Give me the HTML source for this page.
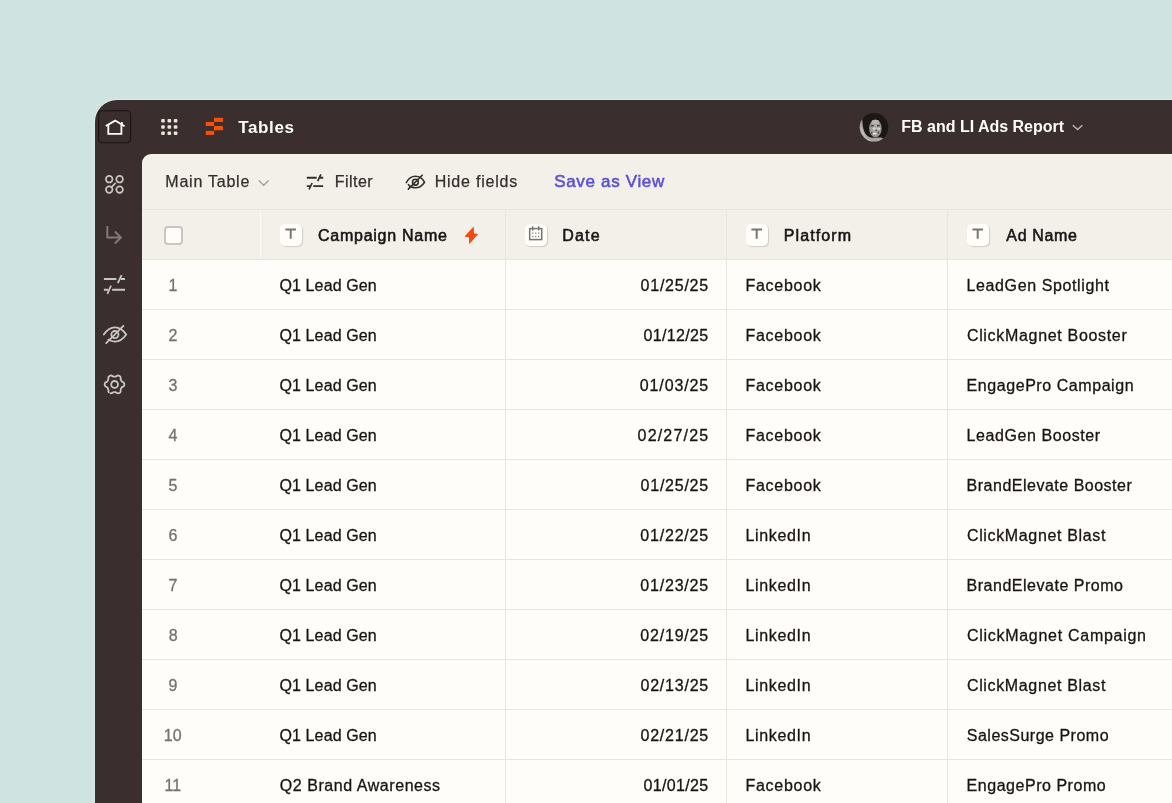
<!DOCTYPE html>
<html lang="en">
<head>
<meta charset="utf-8">
<title>Tables – FB and LI Ads Report</title>
<style>
*{box-sizing:border-box;margin:0;padding:0}
html,body{width:1172px;height:803px;overflow:hidden;background:#cfe4e1;font-family:"Liberation Sans",sans-serif}
.abs{position:absolute}
#app{position:absolute;left:95px;top:100px;width:1100px;height:720px;background:#3a2f2e;border-top-left-radius:22px;box-shadow:0 0 0 1px rgba(240,244,242,.4)}
#panel{position:absolute;left:142px;top:154px;width:1040px;height:660px;background:#f3f0e9;border-top-left-radius:9px;overflow:hidden}
#rowsbg{position:absolute;left:0;top:106px;width:1040px;height:560px;background:#fefdf9}
.hl{position:absolute;left:0;width:1040px;height:1px;background:#e9e6dc}
.vl{position:absolute;top:56px;width:1px;height:620px;background:#e9e6dc}
.chip{position:absolute;width:22px;height:22px;border-radius:5px;background:#fefdf9;box-shadow:1px 1px 1px rgba(110,95,75,.24);top:224px}
#txt{position:absolute;left:0;top:0;width:1172px;height:803px;will-change:transform}
.t{position:absolute;white-space:nowrap;line-height:20px;color:#191413}
.w{color:#fffdf9}
.b{font-weight:bold}
.sb{font-weight:bold}
.tb{color:#362e2d;-webkit-text-stroke:.25px #362e2d}
.sv{color:#5b50d9;-webkit-text-stroke:.55px #5b50d9}
.hd{-webkit-text-stroke:.55px #191413}
.num{color:#77716d;-webkit-text-stroke:.3px #77716d}
.cell{-webkit-text-stroke:.3px #191413}
svg{position:absolute;left:0;top:0}
</style>
</head>
<body>
<div id="app"></div>
<div id="panel">
  <div id="rowsbg"></div>
  <div class="hl" style="top:55px"></div>
  <div class="hl" style="top:105px;background:#e6e3d9"></div>
  <div class="hl" style="top:155px"></div><div class="hl" style="top:205px"></div><div class="hl" style="top:255px"></div>
  <div class="hl" style="top:305px"></div><div class="hl" style="top:355px"></div><div class="hl" style="top:405px"></div>
  <div class="hl" style="top:455px"></div><div class="hl" style="top:505px"></div><div class="hl" style="top:555px"></div>
  <div class="hl" style="top:605px"></div>
  <div class="vl" style="left:118px;height:49px;background:#fbfaf5"></div>
  <div class="vl" style="left:363px"></div>
  <div class="vl" style="left:584px"></div>
  <div class="vl" style="left:805px"></div>
</div>
<div class="abs" style="left:164px;top:226px;width:19px;height:19px;border:2px solid #c9c6c0;border-radius:4px;background:#fefdf9"></div>
<div class="chip" style="left:280px"></div>
<div class="chip" style="left:525px"></div>
<div class="chip" style="left:746px"></div>
<div class="chip" style="left:967px"></div>
<svg width="1172" height="803" viewBox="0 0 1172 803" fill="none">
  <!-- home button -->
  <rect x="98.6" y="110.6" width="32" height="32" rx="3.5" fill="#392e2d" stroke="#1f1817" stroke-width="1.3"/>
  <g stroke="#fffdf9" stroke-width="1.8" stroke-linecap="square" stroke-linejoin="miter">
    <path d="M106.6 125.6 L115.2 120.6 L123.8 125.8"/>
    <path d="M108.3 126 V133.8 H121.4 V126"/>
    <path d="M121.9 122 V124" stroke-linecap="butt"/>
  </g>
  <!-- app grid dots -->
  <g fill="#ebe6dd">
    <rect x="161.2" y="119" width="3.6" height="3.6" rx="1"/><rect x="167.5" y="119" width="3.6" height="3.6" rx="1"/><rect x="173.8" y="119" width="3.6" height="3.6" rx="1"/>
    <rect x="161.2" y="125.2" width="3.6" height="3.6" rx="1"/><rect x="167.5" y="125.2" width="3.6" height="3.6" rx="1"/><rect x="173.8" y="125.2" width="3.6" height="3.6" rx="1"/>
    <rect x="161.2" y="131.4" width="3.6" height="3.6" rx="1"/><rect x="167.5" y="131.4" width="3.6" height="3.6" rx="1"/><rect x="173.8" y="131.4" width="3.6" height="3.6" rx="1"/>
  </g>
  <!-- tables logo -->
  <g fill="#ff4f00">
    <rect x="214" y="117.8" width="9" height="4.1"/>
    <rect x="205.8" y="122" width="8.3" height="4"/>
    <path d="M214 126.1 H222.2 L223 126.9 V130.2 H215 L214 131.2 Z"/>
    <rect x="205.8" y="130.9" width="8.3" height="4"/>
  </g>
  <!-- sidebar: apps -->
  <g stroke="#c9c7c0" stroke-width="1.7">
    <circle cx="109.2" cy="179.2" r="3.3"/><circle cx="119.6" cy="179.2" r="3.3"/>
    <circle cx="109.2" cy="189.6" r="3.3"/><circle cx="119.6" cy="189.6" r="3.3"/>
    <path d="M111.6 187.1 L115.2 183.4" stroke-linecap="round"/>
  </g>
  <!-- sidebar: arrow -->
  <g stroke="#827c78" stroke-width="1.9">
    <path d="M107.3 226 V237.5 H120.4"/>
    <path d="M114.9 231.5 L120.9 237.5 L114.9 243.5"/>
  </g>
  <!-- sidebar: filter -->
  <g stroke="#c9c7c0" stroke-width="2">
    <path d="M103.9 279 H116.4 M120.9 279 H125"/>
    <path d="M121.6 275.2 L117.8 283.2" stroke-width="1.8"/>
    <path d="M103.9 289.8 H108 M112.1 289.8 H125"/>
    <path d="M111 285.6 L107.4 293.8" stroke-width="1.8"/>
  </g>
  <!-- sidebar: eye -->
  <g stroke="#c9c7c0" stroke-width="1.8" stroke-linecap="round">
    <path d="M103.8 334.6 C107 329.6 110.8 327.3 115 327.3 C119.2 327.3 123 329.6 126.2 334.6 C123 339.4 119.2 341.6 115 341.6 C112.6 341.6 110.4 340.9 108.4 339.6"/>
    <circle cx="114.9" cy="334.6" r="3.6"/>
    <path d="M123.4 325.9 L106.2 343.2"/>
  </g>
  <!-- sidebar: gear -->
  <g stroke="#c9c7c0" stroke-width="1.8" stroke-linejoin="round" stroke-linecap="round">
    <path id="gear" d="M108.7 392.1 L108.4 391.5 L108.3 390.6 L108.4 389.7 L108.2 389.1 L108.0 388.6 L107.8 388.1 L107.4 387.7 L107.0 387.3 L106.5 386.8 L105.6 386.5 L105.1 385.9 L104.8 385.2 L104.7 384.6 L104.7 383.9 L104.9 383.2 L105.3 382.6 L106.0 382.1 L106.8 381.8 L107.3 381.3 L107.6 380.9 L107.9 380.4 L108.1 379.9 L108.3 379.4 L108.4 378.7 L108.3 377.7 L108.5 377.0 L108.9 376.4 L109.5 376.0 L110.1 375.7 L110.7 375.5 L111.5 375.5 L112.2 375.9 L112.9 376.4 L113.5 376.6 L114.1 376.7 L114.6 376.7 L115.2 376.6 L115.7 376.5 L116.4 376.3 L117.2 375.6 L117.9 375.5 L118.6 375.6 L119.2 375.8 L119.8 376.2 L120.3 376.7 L120.6 377.3 L120.7 378.2 L120.6 379.1 L120.8 379.7 L121.0 380.2 L121.2 380.7 L121.6 381.1 L122.0 381.5 L122.5 382.0 L123.4 382.3 L123.9 382.9 L124.2 383.6 L124.3 384.2 L124.3 384.9 L124.1 385.6 L123.7 386.2 L123.0 386.7 L122.2 387.0 L121.7 387.5 L121.4 387.9 L121.1 388.4 L120.9 388.9 L120.7 389.4 L120.6 390.1 L120.7 391.1 L120.5 391.8 L120.1 392.4 L119.5 392.8 L118.9 393.1 L118.3 393.3 L117.5 393.3 L116.8 392.9 L116.1 392.4 L115.5 392.2 L114.9 392.1 L114.4 392.1 L113.8 392.2 L113.3 392.3 L112.6 392.5 L111.8 393.2 L111.1 393.3 L110.4 393.2"/>
    <circle cx="114.6" cy="384.4" r="3.4"/>
  </g>
  <!-- avatar -->
  <defs>
    <clipPath id="avc"><circle cx="874" cy="127.3" r="14.3"/></clipPath>
    <radialGradient id="face" cx="0.5" cy="0.5" r="0.6"><stop offset="0" stop-color="#b3afaa"/><stop offset="0.7" stop-color="#9a9692"/><stop offset="1" stop-color="#6a6562"/></radialGradient>
    <filter id="avb" x="-10%" y="-10%" width="120%" height="120%"><feGaussianBlur stdDeviation="0.55"/></filter>
  </defs>
  <g clip-path="url(#avc)"><g filter="url(#avb)">
    <rect x="854" y="108" width="40" height="40" fill="#1d1918"/>
    <path d="M862.2 114 C862 124 863 131 866.5 135 C868.5 137 870 137.6 872 137.8 L881 137.6 L886.5 139.5 L888 148 L854 148 L854 114 Z" fill="#a9a6a1"/>
    <path d="M860.5 126 C861 132 864 138 870 141.5 L874 142.5 L866 138 Z" fill="#c9c6c1"/>
    <ellipse cx="875.4" cy="128.4" rx="6.3" ry="9" fill="url(#face)"/>
    <ellipse cx="875.4" cy="122" rx="3.8" ry="2.2" fill="#b9b6b1"/>
    <ellipse cx="874.2" cy="128.6" rx="1.5" ry="1.2" fill="#dcd9d4"/><ellipse cx="878.8" cy="128.6" rx="1.5" ry="1.2" fill="#dcd9d4"/>
    <rect x="872.8" y="132.9" width="3.8" height="1.4" rx=".6" fill="#f4f2ee"/>
    <rect x="870.8" y="125" width="3" height="1.4" fill="#4a4542"/><rect x="877" y="125" width="2.8" height="1.4" fill="#4a4542"/>
    <rect x="875.2" y="129.8" width="1.8" height="1.4" fill="#615c59"/>
    <rect x="871" y="132" width="1.4" height="1.8" fill="#55504d"/><rect x="877.6" y="131.6" width="1.6" height="2" fill="#55504d"/>
  </g></g>
  <!-- chevrons -->
  <path d="M1072.8 125.2 L1077.6 129.6 L1082.4 125.2" stroke="#b9b4ae" stroke-width="1.5"/>
  <path d="M258.8 180.6 L263.7 185.2 L268.6 180.6" stroke="#a39e98" stroke-width="1.4"/>
  <!-- toolbar: filter icon -->
  <g stroke="#362e2d" stroke-width="1.9">
    <path d="M306.8 177.8 H316.7 M319.6 177.8 H323.2"/>
    <path d="M320.9 174.3 L317.7 181.1" stroke-width="1.7"/>
    <path d="M306.8 186.1 H310.2 M313.2 186.1 H323.2"/>
    <path d="M312.1 183 L309.1 189.4" stroke-width="1.7"/>
  </g>
  <!-- toolbar: eye icon -->
  <g stroke="#362e2d" stroke-width="1.6" stroke-linecap="round">
    <path d="M406.3 182.6 C408.5 178.4 411.6 176.3 415.4 176.3 C419.2 176.3 422.4 178.4 424.5 182.2 C422.2 185.8 419.2 187.8 415.4 187.8 C413.2 187.8 411.4 187.3 409.8 186.3"/>
    <path d="M408.4 184.5 L409.4 185.7"/>
    <circle cx="415.4" cy="182.2" r="2.9"/>
    <path d="M422.2 175.2 L408.3 189.1"/>
  </g>
  <!-- header icons: T -->
  <g stroke="#7a7571" stroke-width="2">
    <path d="M285.4 229.4 H296 M290.7 229.4 V238.8"/>
    <path d="M751.4 229.4 H762 M756.7 229.4 V238.8"/>
    <path d="M972.4 229.4 H983 M977.7 229.4 V238.8"/>
  </g>
  <!-- calendar -->
  <g stroke="#7a7571" stroke-width="1.5">
    <rect x="529.7" y="228.6" width="12" height="11"/>
    <path d="M532.7 226.3 V230.6 M538.7 226.3 V230.6"/>
  </g>
  <g fill="#7d7874">
    <rect x="532.2" y="232.5" width="1.2" height="1.2"/><rect x="535.1" y="232.5" width="1.2" height="1.2"/><rect x="538" y="232.5" width="1.2" height="1.2"/>
    <rect x="532.2" y="235.9" width="1.2" height="1.2"/><rect x="535.1" y="235.9" width="1.2" height="1.2"/><rect x="538" y="235.9" width="1.2" height="1.2"/>
  </g>
  <!-- lightning -->
  <path d="M473.7 226.5 L474 233.5 L478.1 234 L469.2 244.3 L469 237.2 L464.5 236.5 Z" fill="#f9480b"/>
</svg>
<div id="txt">
<div class="grp" id="topbar-text"><span class="t w b" id="tables" style="left:238.23px;top:118px;font-size:17px;letter-spacing:0.621px">Tables</span><span class="t w sb" id="report" style="left:901.36px;top:117px;font-size:16px;letter-spacing:-0.014px">FB and LI Ads Report</span></div>
<div class="grp" id="toolbar-text"><span class="t tb" id="maint" style="left:165.31px;top:172px;font-size:16px;letter-spacing:0.774px">Main Table</span><span class="t tb" id="filter" style="left:334.72px;top:172px;font-size:16px;letter-spacing:0.468px">Filter</span><span class="t tb" id="hide" style="left:434.71px;top:172px;font-size:16px;letter-spacing:0.774px">Hide fields</span><span class="t sv" id="save" style="left:554.18px;top:172px;font-size:17px;letter-spacing:0.672px">Save as View</span></div>
<div class="grp" id="header-text"><span class="t hd" id="h1" style="left:318.05px;top:226px;font-size:16px;letter-spacing:0.738px">Campaign Name</span><span class="t hd" id="h2" style="left:562.34px;top:226px;font-size:16px;letter-spacing:1.163px">Date</span><span class="t hd" id="h3" style="left:783.87px;top:226px;font-size:16px;letter-spacing:1.082px">Platform</span><span class="t hd" id="h4" style="left:1006.32px;top:226px;font-size:16px;letter-spacing:0.655px">Ad Name</span></div>
<div class="grp row"><span class="t num" id="r0c0" style="left:168.43px;top:276px;font-size:16px;letter-spacing:0.000px">1</span><span class="t cell" id="r0c1" style="left:279.43px;top:276px;font-size:16px;letter-spacing:0.126px">Q1 Lead Gen</span><span class="t cell" id="r0c2" style="left:640.57px;top:276px;font-size:16px;letter-spacing:0.761px">01/25/25</span><span class="t cell" id="r0c3" style="left:745.45px;top:276px;font-size:16px;letter-spacing:0.734px">Facebook</span><span class="t cell" id="r0c4" style="left:966.61px;top:276px;font-size:16px;letter-spacing:0.605px">LeadGen Spotlight</span></div>
<div class="grp row"><span class="t num" id="r1c0" style="left:168.55px;top:326px;font-size:16px;letter-spacing:0.000px">2</span><span class="t cell" id="r1c1" style="left:279.43px;top:326px;font-size:16px;letter-spacing:0.126px">Q1 Lead Gen</span><span class="t cell" id="r1c2" style="left:643.47px;top:326px;font-size:16px;letter-spacing:0.358px">01/12/25</span><span class="t cell" id="r1c3" style="left:745.45px;top:326px;font-size:16px;letter-spacing:0.734px">Facebook</span><span class="t cell" id="r1c4" style="left:966.92px;top:326px;font-size:16px;letter-spacing:0.679px">ClickMagnet Booster</span></div>
<div class="grp row"><span class="t num" id="r2c0" style="left:168.59px;top:376px;font-size:16px;letter-spacing:0.000px">3</span><span class="t cell" id="r2c1" style="left:279.43px;top:376px;font-size:16px;letter-spacing:0.126px">Q1 Lead Gen</span><span class="t cell" id="r2c2" style="left:639.85px;top:376px;font-size:16px;letter-spacing:0.860px">01/03/25</span><span class="t cell" id="r2c3" style="left:745.45px;top:376px;font-size:16px;letter-spacing:0.734px">Facebook</span><span class="t cell" id="r2c4" style="left:966.61px;top:376px;font-size:16px;letter-spacing:0.561px">EngagePro Campaign</span></div>
<div class="grp row"><span class="t num" id="r3c0" style="left:168.54px;top:426px;font-size:16px;letter-spacing:0.000px">4</span><span class="t cell" id="r3c1" style="left:279.43px;top:426px;font-size:16px;letter-spacing:0.126px">Q1 Lead Gen</span><span class="t cell" id="r3c2" style="left:637.56px;top:426px;font-size:16px;letter-spacing:1.193px">02/27/25</span><span class="t cell" id="r3c3" style="left:745.45px;top:426px;font-size:16px;letter-spacing:0.734px">Facebook</span><span class="t cell" id="r3c4" style="left:966.61px;top:426px;font-size:16px;letter-spacing:0.577px">LeadGen Booster</span></div>
<div class="grp row"><span class="t num" id="r4c0" style="left:168.54px;top:476px;font-size:16px;letter-spacing:0.000px">5</span><span class="t cell" id="r4c1" style="left:279.43px;top:476px;font-size:16px;letter-spacing:0.126px">Q1 Lead Gen</span><span class="t cell" id="r4c2" style="left:640.57px;top:476px;font-size:16px;letter-spacing:0.761px">01/25/25</span><span class="t cell" id="r4c3" style="left:745.45px;top:476px;font-size:16px;letter-spacing:0.734px">Facebook</span><span class="t cell" id="r4c4" style="left:966.60px;top:476px;font-size:16px;letter-spacing:0.502px">BrandElevate Booster</span></div>
<div class="grp row"><span class="t num" id="r5c0" style="left:168.55px;top:526px;font-size:16px;letter-spacing:0.000px">6</span><span class="t cell" id="r5c1" style="left:279.43px;top:526px;font-size:16px;letter-spacing:0.126px">Q1 Lead Gen</span><span class="t cell" id="r5c2" style="left:640.34px;top:526px;font-size:16px;letter-spacing:0.796px">01/22/25</span><span class="t cell" id="r5c3" style="left:745.45px;top:526px;font-size:16px;letter-spacing:0.668px">LinkedIn</span><span class="t cell" id="r5c4" style="left:966.93px;top:526px;font-size:16px;letter-spacing:0.649px">ClickMagnet Blast</span></div>
<div class="grp row"><span class="t num" id="r6c0" style="left:168.61px;top:576px;font-size:16px;letter-spacing:0.000px">7</span><span class="t cell" id="r6c1" style="left:279.43px;top:576px;font-size:16px;letter-spacing:0.126px">Q1 Lead Gen</span><span class="t cell" id="r6c2" style="left:640.35px;top:576px;font-size:16px;letter-spacing:0.794px">01/23/25</span><span class="t cell" id="r6c3" style="left:745.45px;top:576px;font-size:16px;letter-spacing:0.668px">LinkedIn</span><span class="t cell" id="r6c4" style="left:966.60px;top:576px;font-size:16px;letter-spacing:0.513px">BrandElevate Promo</span></div>
<div class="grp row"><span class="t num" id="r7c0" style="left:168.68px;top:626px;font-size:16px;letter-spacing:0.000px">8</span><span class="t cell" id="r7c1" style="left:279.43px;top:626px;font-size:16px;letter-spacing:0.126px">Q1 Lead Gen</span><span class="t cell" id="r7c2" style="left:640.34px;top:626px;font-size:16px;letter-spacing:0.795px">02/19/25</span><span class="t cell" id="r7c3" style="left:745.45px;top:626px;font-size:16px;letter-spacing:0.668px">LinkedIn</span><span class="t cell" id="r7c4" style="left:966.93px;top:626px;font-size:16px;letter-spacing:0.720px">ClickMagnet Campaign</span></div>
<div class="grp row"><span class="t num" id="r8c0" style="left:168.60px;top:676px;font-size:16px;letter-spacing:0.000px">9</span><span class="t cell" id="r8c1" style="left:279.43px;top:676px;font-size:16px;letter-spacing:0.126px">Q1 Lead Gen</span><span class="t cell" id="r8c2" style="left:640.52px;top:676px;font-size:16px;letter-spacing:0.774px">02/13/25</span><span class="t cell" id="r8c3" style="left:745.45px;top:676px;font-size:16px;letter-spacing:0.668px">LinkedIn</span><span class="t cell" id="r8c4" style="left:966.93px;top:676px;font-size:16px;letter-spacing:0.649px">ClickMagnet Blast</span></div>
<div class="grp row"><span class="t num" id="r9c0" style="left:163.85px;top:726px;font-size:16px;letter-spacing:0.000px">10</span><span class="t cell" id="r9c1" style="left:279.43px;top:726px;font-size:16px;letter-spacing:0.126px">Q1 Lead Gen</span><span class="t cell" id="r9c2" style="left:640.50px;top:726px;font-size:16px;letter-spacing:0.777px">02/21/25</span><span class="t cell" id="r9c3" style="left:745.45px;top:726px;font-size:16px;letter-spacing:0.668px">LinkedIn</span><span class="t cell" id="r9c4" style="left:966.81px;top:726px;font-size:16px;letter-spacing:0.497px">SalesSurge Promo</span></div>
<div class="grp row"><span class="t num" id="r10c0" style="left:164.55px;top:776px;font-size:16px;letter-spacing:0.000px">11</span><span class="t cell" id="r10c1" style="left:279.75px;top:776px;font-size:16px;letter-spacing:0.556px">Q2 Brand Awareness</span><span class="t cell" id="r10c2" style="left:643.58px;top:776px;font-size:16px;letter-spacing:0.326px">01/01/25</span><span class="t cell" id="r10c3" style="left:745.45px;top:776px;font-size:16px;letter-spacing:0.734px">Facebook</span><span class="t cell" id="r10c4" style="left:966.61px;top:776px;font-size:16px;letter-spacing:0.529px">EngagePro Promo</span></div>
</div>
</body>
</html>
